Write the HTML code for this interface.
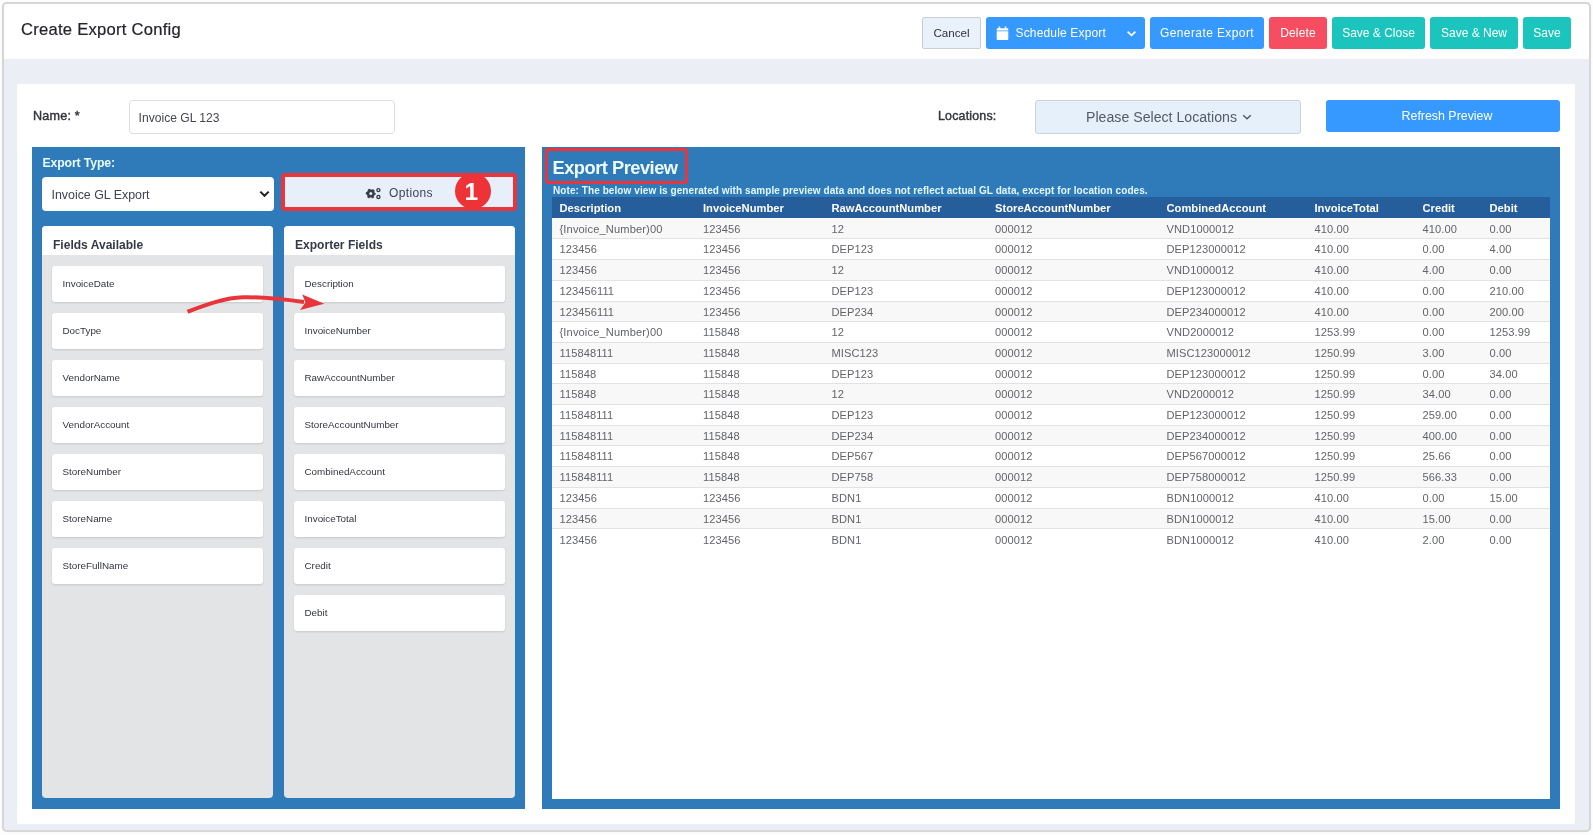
<!DOCTYPE html>
<html lang="en">
<head>
<meta charset="utf-8">
<title>Create Export Config</title>
<style>
*{box-sizing:border-box;margin:0;padding:0}
html,body{width:1593px;height:835px;overflow:hidden;background:#fdfdfd}
body{position:relative;font-family:"Liberation Sans",sans-serif;color:#3f4254;-webkit-font-smoothing:antialiased}
.abs{position:absolute}
.nw{white-space:nowrap}
#frame{left:1.6px;top:1.5px;width:1589px;height:830.2px;border:2px solid #d6d6d8;border-radius:5px;background:#eceef5;overflow:hidden;box-shadow:0 0 1px #ddd}
#hdr{left:0;top:0;width:1585px;height:55px;background:#fff}
#card{left:17px;top:84px;width:1558px;height:740px;background:#fff;border-radius:2px}
#title{left:21px;top:19px;font-size:16.6px;line-height:22px;color:#23232b;letter-spacing:0.25px;-webkit-text-stroke:.2px #23232b}
.btn{top:17px;height:32px;border-radius:3px;color:#fff;font-size:12px;line-height:32px;text-align:center;white-space:nowrap}
.b-blue{background:#3699ff}
.b-red{background:#f64e60}
.b-green{background:#1bc5bd}
.b-light{background:#e9f1fa;border:1px solid #c9ced8;color:#2f3140;line-height:30px;border-radius:2px;font-size:11.6px}
.lbl{font-weight:normal;-webkit-text-stroke:.42px #34353d;font-size:12.6px;letter-spacing:.2px;line-height:16px;color:#34353d}
#name{left:129px;top:100px;width:266px;height:34px;border:1px solid #dcdde2;border-radius:4px;background:#fff;font-size:12.1px;line-height:34px;padding-left:8.6px;color:#444650}
#loc{left:1035px;top:100px;width:266px;height:34px;border:1px solid #ccd2da;border-radius:3px;background:#e6f0fb;font-size:14.15px;line-height:33px;text-align:center;color:#555b66;padding-right:13px}
#refresh{left:1326px;top:100px;width:234px;height:32px;border-radius:3px;background:#3699ff;color:#fff;font-size:12.4px;line-height:32.5px;text-align:center;padding-left:8px}
.panel{background:#2f7bba}
#lp{left:32px;top:147px;width:493px;height:662px}
#rp{left:542px;top:147px;width:1018px;height:662px}
.col{top:226px;width:231px;height:572px;background:#e3e4e6;border-radius:4px;overflow:hidden}
.colh{left:0;top:0;width:100%;height:29.3px;background:#fff;font-weight:bold;font-size:12.05px;line-height:29px;padding-left:11px;padding-top:5px;color:#343a46}
.it{left:10px;width:211px;height:36px;background:#fff;border-radius:3px;box-shadow:0 1px 2px rgba(0,0,0,.12);font-size:9.85px;line-height:36px;padding-left:10.5px;color:#33353e;white-space:nowrap}

table{border-collapse:separate;border-spacing:0;table-layout:fixed;width:998px}
th{background:#265e9c;color:#fff;font-weight:bold;font-size:11.2px;text-align:left;height:21px;padding:1.6px 0 0 7.5px;white-space:nowrap;line-height:18px}
td{font-size:11.1px;letter-spacing:.08px;color:#626468;height:21px;padding:0 0 0 7.5px;white-space:nowrap;border-bottom:1px solid #e2e2e2;line-height:16px}
tbody tr:nth-child(odd) td{background:#f8f8f8}
tbody tr:last-child td{border-bottom:none}
tbody tr:nth-child(5) td,tbody tr:nth-child(8) td,tbody tr:nth-child(11) td,tbody tr:nth-child(15) td{height:20px;padding-top:1px}
tbody tr:first-child td{padding-top:2.4px}
</style>
</head>
<body>
<div id="root" class="abs" style="left:0;top:0;width:1593px;height:835px;will-change:transform">
<div id="frame" class="abs"><div id="hdr" class="abs"></div></div>
<div id="card" class="abs"></div>

<div id="title" class="abs nw">Create Export Config</div>

<div class="abs btn b-light" style="left:922px;width:59px">Cancel</div>
<div class="abs btn b-blue" style="left:986px;width:159px"><span class="abs" style="left:29.5px;top:0;letter-spacing:.16px">Schedule Export</span>
<svg class="abs" style="left:10px;top:9px" width="13" height="15" viewBox="0 0 13 15"><path d="M2.6 .6h1.6v1.6h4.6V.6h1.6v1.6h.9a1 1 0 0 1 1 1v1.2H.7V3.2a1 1 0 0 1 1-1h.9zM.7 5.2h11.6v7.7a1 1 0 0 1-1 1H1.7a1 1 0 0 1-1-1z" fill="#fff"/></svg>
<svg class="abs" style="left:140px;top:13px" width="11" height="8" viewBox="0 0 11 8"><path d="M1.6 1.6 L5.5 5.3 L9.4 1.6" fill="none" stroke="#fff" stroke-width="1.8"/></svg>
</div>
<div class="abs btn b-blue" style="left:1150px;width:114px;letter-spacing:.4px">Generate Export</div>
<div class="abs btn b-red" style="left:1269px;width:58px;letter-spacing:.15px">Delete</div>
<div class="abs btn b-green" style="left:1332px;width:93px">Save &amp; Close</div>
<div class="abs btn b-green" style="left:1430px;width:88px">Save &amp; New</div>
<div class="abs btn b-green" style="left:1523px;width:48px">Save</div>

<div class="abs lbl nw" style="left:33px;top:108px">Name: *</div>
<div id="name" class="abs nw">Invoice GL 123</div>
<div class="abs lbl nw" style="left:938px;top:107.5px;font-size:12.4px">Locations:</div>
<div id="loc" class="abs nw">Please Select Locations<svg class="abs" style="left:205.5px;top:13px" width="10" height="7" viewBox="0 0 10 7"><path d="M1.2 1.2 L5 4.8 L8.8 1.2" fill="none" stroke="#555b66" stroke-width="1.5"/></svg></div>
<div id="refresh" class="abs nw">Refresh Preview</div>

<div id="lp" class="abs panel"></div>
<div id="rp" class="abs panel"></div>

<div class="abs nw" style="left:42.5px;top:154.6px;font-weight:bold;font-size:12.3px;line-height:16px;color:#e8fbff;letter-spacing:-.15px">Export Type:</div>
<div id="sel" class="abs nw" style="left:42px;top:177px;width:232px;height:34px;background:#fff;border-radius:4px;font-size:12.4px;line-height:36px;padding-left:9.5px;color:#3f4254">Invoice GL Export
<svg class="abs" style="left:217px;top:13px" width="11" height="8" viewBox="0 0 11 8"><path d="M1.3 1.6 L5.5 5.8 L9.7 1.6" fill="none" stroke="#222" stroke-width="2"/></svg>
</div>

<div id="opt" class="abs" style="left:281px;top:172.5px;width:235.5px;height:38px;border:4px solid #e9353d;border-radius:4px;background:#e7f0fa"></div>
<svg class="abs" style="left:364px;top:186px" width="18" height="15" viewBox="364 186 18 15">
 <g fill="none" stroke="#393c49">
  <circle cx="370.8" cy="193.6" r="2.75" stroke-width="2.5"/>
  <circle cx="370.8" cy="193.6" r="4.2" stroke-width="1.6" stroke-dasharray="2.2 2.198" stroke-dashoffset="1.1"/>
  <circle cx="378.4" cy="190.1" r="1.55" stroke-width="1.35"/>
  <circle cx="378.4" cy="196.9" r="1.55" stroke-width="1.35"/>
 </g>
</svg>
<div class="abs nw" style="left:389px;top:185px;font-size:12px;line-height:16px;color:#3f4254;letter-spacing:.35px">Options</div>
<div class="abs" style="left:455px;top:173.3px;width:36px;height:36px;border-radius:50%;background:#ee3338;color:#fff;font-weight:bold;font-size:24.5px;line-height:36px;text-align:center"><span style="position:relative;left:-1.7px;top:.6px">1</span></div>

<div class="abs col" style="left:42px">
 <div class="abs colh nw">Fields Available</div>
 <div class="abs it" style="top:40px">InvoiceDate</div>
 <div class="abs it" style="top:87px">DocType</div>
 <div class="abs it" style="top:134px">VendorName</div>
 <div class="abs it" style="top:181px">VendorAccount</div>
 <div class="abs it" style="top:228px">StoreNumber</div>
 <div class="abs it" style="top:275px">StoreName</div>
 <div class="abs it" style="top:322px">StoreFullName</div>
</div>
<div class="abs col" style="left:284px;width:231.4px">
 <div class="abs colh nw">Exporter Fields</div>
 <div class="abs it" style="top:40px">Description</div>
 <div class="abs it" style="top:87px">InvoiceNumber</div>
 <div class="abs it" style="top:134px">RawAccountNumber</div>
 <div class="abs it" style="top:181px">StoreAccountNumber</div>
 <div class="abs it" style="top:228px">CombinedAccount</div>
 <div class="abs it" style="top:275px">InvoiceTotal</div>
 <div class="abs it" style="top:322px">Credit</div>
 <div class="abs it" style="top:369px">Debit</div>
</div>
<svg class="abs" style="left:180px;top:288px" width="150" height="30" viewBox="180 288 150 30">
 <path d="M187.5 311.7 C205 305.2 224 297.8 243 297.3 C262 296.9 284 299.2 304 302.1" fill="none" stroke="#e8343b" stroke-width="4" stroke-linecap="butt"/>
 <path d="M302.2 294.4 L324.3 303.8 L300 310 L305.5 302.4 Z" fill="#e8343b"/>
</svg>

<div class="abs" style="left:545px;top:148px;width:143px;height:36px;border:3.5px solid #e9353d;border-radius:3px"></div>
<div class="abs nw" style="left:552.5px;top:156.2px;font-size:18.3px;line-height:24px;font-weight:bold;color:#eefcff;letter-spacing:-.5px">Export Preview</div>
<div class="abs nw" style="left:553px;top:184.4px;font-size:10px;line-height:13px;font-weight:bold;color:#e3f8ff;letter-spacing:.08px">Note: The below view is generated with sample preview data and does not reflect actual GL data, except for location codes.</div>
<div id="tbw" class="abs" style="left:552px;top:197px;width:998px;height:602px;background:#fff">
<table>
<colgroup><col style="width:143.5px"><col style="width:128.5px"><col style="width:163.5px"><col style="width:171.5px"><col style="width:148px"><col style="width:108px"><col style="width:67px"><col style="width:68px"></colgroup>
<thead><tr><th>Description</th><th>InvoiceNumber</th><th>RawAccountNumber</th><th>StoreAccountNumber</th><th>CombinedAccount</th><th>InvoiceTotal</th><th>Credit</th><th>Debit</th></tr></thead>
<tbody>
<tr><td style="letter-spacing:.14px">{Invoice_Number)00</td><td>123456</td><td>12</td><td>000012</td><td>VND1000012</td><td>410.00</td><td>410.00</td><td>0.00</td></tr>
<tr><td>123456</td><td>123456</td><td>DEP123</td><td>000012</td><td>DEP123000012</td><td>410.00</td><td>0.00</td><td>4.00</td></tr>
<tr><td>123456</td><td>123456</td><td>12</td><td>000012</td><td>VND1000012</td><td>410.00</td><td>4.00</td><td>0.00</td></tr>
<tr><td>123456111</td><td>123456</td><td>DEP123</td><td>000012</td><td>DEP123000012</td><td>410.00</td><td>0.00</td><td>210.00</td></tr>
<tr><td>123456111</td><td>123456</td><td>DEP234</td><td>000012</td><td>DEP234000012</td><td>410.00</td><td>0.00</td><td>200.00</td></tr>
<tr><td style="letter-spacing:.14px">{Invoice_Number)00</td><td>115848</td><td>12</td><td>000012</td><td>VND2000012</td><td>1253.99</td><td>0.00</td><td>1253.99</td></tr>
<tr><td>115848111</td><td>115848</td><td>MISC123</td><td>000012</td><td>MISC123000012</td><td>1250.99</td><td>3.00</td><td>0.00</td></tr>
<tr><td>115848</td><td>115848</td><td>DEP123</td><td>000012</td><td>DEP123000012</td><td>1250.99</td><td>0.00</td><td>34.00</td></tr>
<tr><td>115848</td><td>115848</td><td>12</td><td>000012</td><td>VND2000012</td><td>1250.99</td><td>34.00</td><td>0.00</td></tr>
<tr><td>115848111</td><td>115848</td><td>DEP123</td><td>000012</td><td>DEP123000012</td><td>1250.99</td><td>259.00</td><td>0.00</td></tr>
<tr><td>115848111</td><td>115848</td><td>DEP234</td><td>000012</td><td>DEP234000012</td><td>1250.99</td><td>400.00</td><td>0.00</td></tr>
<tr><td>115848111</td><td>115848</td><td>DEP567</td><td>000012</td><td>DEP567000012</td><td>1250.99</td><td>25.66</td><td>0.00</td></tr>
<tr><td>115848111</td><td>115848</td><td>DEP758</td><td>000012</td><td>DEP758000012</td><td>1250.99</td><td>566.33</td><td>0.00</td></tr>
<tr><td>123456</td><td>123456</td><td>BDN1</td><td>000012</td><td>BDN1000012</td><td>410.00</td><td>0.00</td><td>15.00</td></tr>
<tr><td>123456</td><td>123456</td><td>BDN1</td><td>000012</td><td>BDN1000012</td><td>410.00</td><td>15.00</td><td>0.00</td></tr>
<tr><td>123456</td><td>123456</td><td>BDN1</td><td>000012</td><td>BDN1000012</td><td>410.00</td><td>2.00</td><td>0.00</td></tr>
</tbody>
</table>
</div>

</div>
</body>
</html>
